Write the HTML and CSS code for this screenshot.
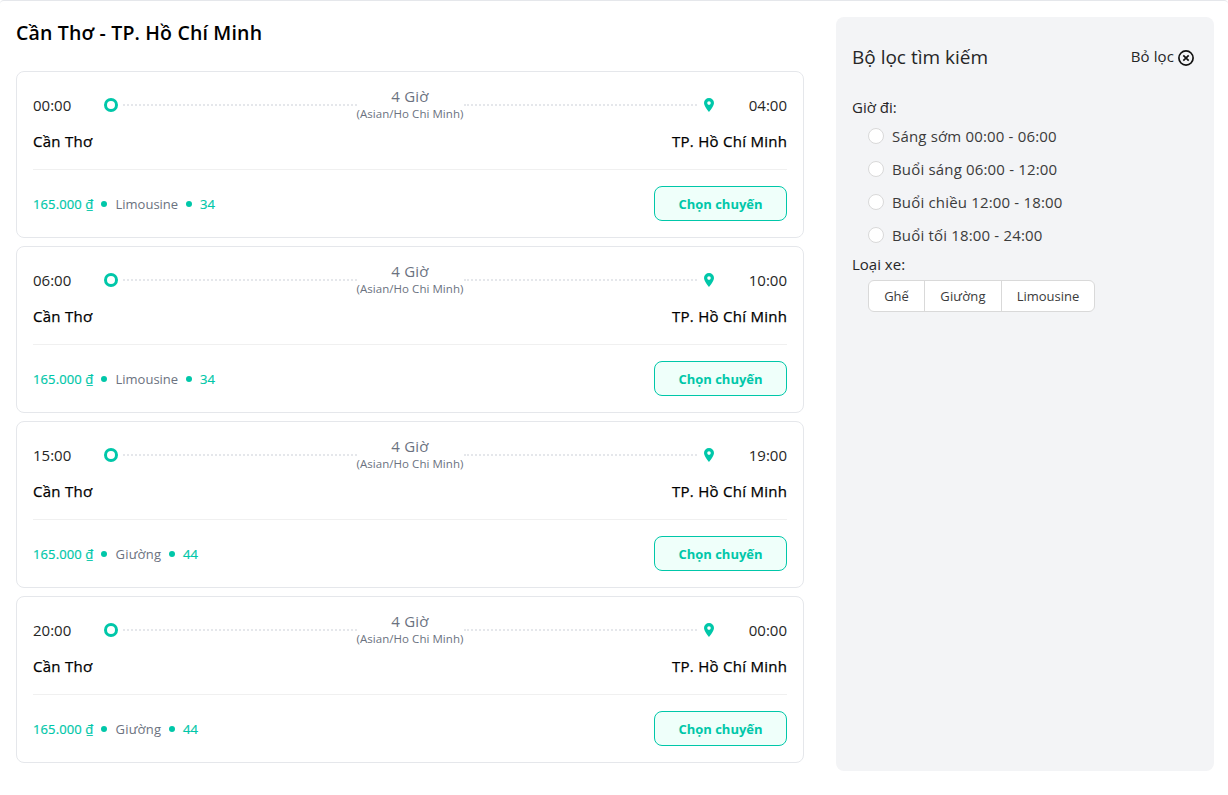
FILE: index.html
```html
<!DOCTYPE html>
<html lang="vi">
<head>
<meta charset="utf-8">
<title>Cần Thơ - TP. Hồ Chí Minh</title>
<link rel="stylesheet" href="styles.css">
</head>
<body>
<div class="page">
  <main class="trips">
    <h1 class="title"><span>Cần Thơ - TP. Hồ Chí Minh</span></h1>
    <div class="list">
      <article class="card">
        <div class="route">
          <span class="time">00:00</span><span class="start"></span><span class="line"></span>
          <span class="length"><span class="hours">4 Giờ</span><span class="zone">(Asian/Ho Chi Minh)</span></span>
          <span class="line"></span><svg class="pin" viewBox="0 0 10 14"><path fill-rule="evenodd" d="M5 0a5 5 0 0 0-5 5c0 3.3 5 9 5 9s5-5.700 5-9a5 5 0 0 0-5-5Zm0 3.300a1.800 1.800 0 1 1 0 3.600 1.800 1.800 0 0 1 0-3.600Z"/></svg><span class="time end">04:00</span>
        </div>
        <div class="places"><span class="from">Cần Thơ</span><span class="to">TP. Hồ Chí Minh</span></div>
        <div class="foot">
          <span class="price">165.000 ₫</span><i class="dot"></i><span class="kind limo">Limousine</span><i class="dot"></i><span class="seats">34</span>
          <button class="choose">Chọn chuyến</button>
        </div>
      </article>
      <article class="card">
        <div class="route">
          <span class="time">06:00</span><span class="start"></span><span class="line"></span>
          <span class="length"><span class="hours">4 Giờ</span><span class="zone">(Asian/Ho Chi Minh)</span></span>
          <span class="line"></span><svg class="pin" viewBox="0 0 10 14"><path fill-rule="evenodd" d="M5 0a5 5 0 0 0-5 5c0 3.3 5 9 5 9s5-5.700 5-9a5 5 0 0 0-5-5Zm0 3.300a1.800 1.800 0 1 1 0 3.600 1.800 1.800 0 0 1 0-3.600Z"/></svg><span class="time end">10:00</span>
        </div>
        <div class="places"><span class="from">Cần Thơ</span><span class="to">TP. Hồ Chí Minh</span></div>
        <div class="foot">
          <span class="price">165.000 ₫</span><i class="dot"></i><span class="kind limo">Limousine</span><i class="dot"></i><span class="seats">34</span>
          <button class="choose">Chọn chuyến</button>
        </div>
      </article>
      <article class="card">
        <div class="route">
          <span class="time">15:00</span><span class="start"></span><span class="line"></span>
          <span class="length"><span class="hours">4 Giờ</span><span class="zone">(Asian/Ho Chi Minh)</span></span>
          <span class="line"></span><svg class="pin" viewBox="0 0 10 14"><path fill-rule="evenodd" d="M5 0a5 5 0 0 0-5 5c0 3.3 5 9 5 9s5-5.700 5-9a5 5 0 0 0-5-5Zm0 3.300a1.800 1.800 0 1 1 0 3.600 1.800 1.800 0 0 1 0-3.600Z"/></svg><span class="time end">19:00</span>
        </div>
        <div class="places"><span class="from">Cần Thơ</span><span class="to">TP. Hồ Chí Minh</span></div>
        <div class="foot">
          <span class="price">165.000 ₫</span><i class="dot"></i><span class="kind bed">Giường</span><i class="dot"></i><span class="seats">44</span>
          <button class="choose">Chọn chuyến</button>
        </div>
      </article>
      <article class="card">
        <div class="route">
          <span class="time">20:00</span><span class="start"></span><span class="line"></span>
          <span class="length"><span class="hours">4 Giờ</span><span class="zone">(Asian/Ho Chi Minh)</span></span>
          <span class="line"></span><svg class="pin" viewBox="0 0 10 14"><path fill-rule="evenodd" d="M5 0a5 5 0 0 0-5 5c0 3.3 5 9 5 9s5-5.700 5-9a5 5 0 0 0-5-5Zm0 3.300a1.800 1.800 0 1 1 0 3.600 1.800 1.800 0 0 1 0-3.600Z"/></svg><span class="time end">00:00</span>
        </div>
        <div class="places"><span class="from">Cần Thơ</span><span class="to">TP. Hồ Chí Minh</span></div>
        <div class="foot">
          <span class="price">165.000 ₫</span><i class="dot"></i><span class="kind bed">Giường</span><i class="dot"></i><span class="seats">44</span>
          <button class="choose">Chọn chuyến</button>
        </div>
      </article>
    </div>
  </main>
  <aside class="filter">
    <header class="filter-head">
      <h2 class="filter-title">Bộ lọc tìm kiếm</h2>
      <span class="clear">Bỏ lọc<svg class="clear-icon" viewBox="0 0 16 16"><circle cx="8" cy="8" r="7.100"/><path d="M5.300 5.300l5.400 5.400M10.700 5.300l-5.400 5.400"/></svg></span>
    </header>
    <div class="label">Giờ đi:</div>
    <div class="options">
      <label class="option"><i class="radio"></i>Sáng sớm 00:00 - 06:00</label>
      <label class="option"><i class="radio"></i>Buổi sáng 06:00 - 12:00</label>
      <label class="option"><i class="radio"></i>Buổi chiều 12:00 - 18:00</label>
      <label class="option"><i class="radio"></i>Buổi tối 18:00 - 24:00</label>
    </div>
    <div class="label">Loại xe:</div>
    <div class="kinds"><span class="seg seat">Ghế</span><span class="seg sleeper">Giường</span><span class="seg limousine">Limousine</span></div>
  </aside>
</div>
</body>
</html>
```
FILE: styles.css
```css
* { box-sizing: border-box; }
body { margin: 0; background: #fff; color: #262626; font: 15px/24px "Open Sans", "Noto Sans", sans-serif; }
.page { height: 795px; border-top: 1px solid #e5e7eb; border-radius: 4px 4px 0 0; padding: 16px 14px 24px 16px; display: flex; gap: 32px; overflow: hidden; }
.trips { width: 788px; }
.title { margin: 0 0 22px; height: 32px; font-size: 19.500px; letter-spacing: .17px; line-height: 32px; font-weight: 600; color: #000; white-space: nowrap; }
.list { display: flex; flex-direction: column; gap: 8px; }
.card { height: 167px; border: 1px solid #e5e7eb; border-radius: 8px; padding: 16px; white-space: nowrap; }
.route { height: 34px; display: flex; align-items: center; }
.time { width: 71px; }
.end { width: 73px; text-align: right; }
.start { width: 14px; height: 14px; border: 3px solid #00c7a9; border-radius: 50%; margin-right: 5px; }
.line { flex: 1; height: 0; border-top: 2px dotted #e5e7eb; }
.length { width: 107px; display: flex; flex-direction: column; align-items: center; color: #6b7280; }
.hours { line-height: 18px; height: 18px; margin-top: -2px; margin-bottom: 1px; letter-spacing: .2px; }
.zone { font-size: 11.500px; line-height: 16px; letter-spacing: .05px; }
.pin { width: 10px; height: 14px; margin-left: 7px; fill: #00c7a9; }
.places { margin-top: 7px; height: 24px; display: flex; justify-content: space-between; color: #000; letter-spacing: .28px; -webkit-text-stroke: .25px #000; }
.to { margin-right: -.28px; }
.foot { margin-top: 16px; border-top: 1px solid #f0f0f0; padding-top: 16px; display: flex; align-items: center; font-size: 13px; color: #6b7280; }
.price, .seats { color: #00c7a9; letter-spacing: .12px; -webkit-text-stroke: .2px #00c7a9; }
.price { width: 61px; }
.limo { width: 63px; }
.bed { width: 46px; letter-spacing: .25px; }
.dot { width: 6px; height: 6px; border-radius: 50%; background: #00c7a9; margin: 0 8.500px 0 7px; }
.choose { margin-left: auto; width: 133px; height: 35px; border: 1px solid #00c7a9; border-radius: 8px; background: #effffa; color: #00c7a9; font: 700 13px/20px "Open Sans", "Noto Sans", sans-serif; padding: 0; }
.filter { flex: 1; height: 754px; background: #f3f4f6; border-radius: 8px; padding: 24px 16px; white-space: nowrap; }
.filter-head { height: 32px; display: flex; justify-content: space-between; align-items: center; padding-right: 4px; margin-bottom: 21px; }
.filter-title { margin: 0; font-size: 19px; line-height: 32px; font-weight: 400; }
.clear { height: 26px; display: flex; align-items: flex-start; gap: 4px; letter-spacing: .1px; }
.clear-icon { width: 16px; height: 16px; margin-top: 6px; fill: none; stroke: #111; stroke-width: 1.700; }
.label { height: 26px; line-height: 26px; }
.options { padding: 4px 0 4px 16px; display: flex; flex-direction: column; gap: 9px; }
.option { height: 24px; display: flex; align-items: center; gap: 8px; color: #3b3b3b; letter-spacing: .17px; }
.radio { width: 16px; height: 16px; border: 1px solid #d9d9d9; border-radius: 50%; background: #fff; }
.kinds { margin: 3px 0 0 16px; width: 227px; height: 32px; display: flex; background: #fff; border: 1px solid #d9d9d9; border-radius: 6px; font-size: 13px; line-height: 30px; text-align: center; color: #3b3b3b; }
.seat { width: 55px; }
.sleeper { width: 77px; border-left: 1px solid #d9d9d9; letter-spacing: .2px; }
.limousine { flex: 1; border-left: 1px solid #d9d9d9; }
```
